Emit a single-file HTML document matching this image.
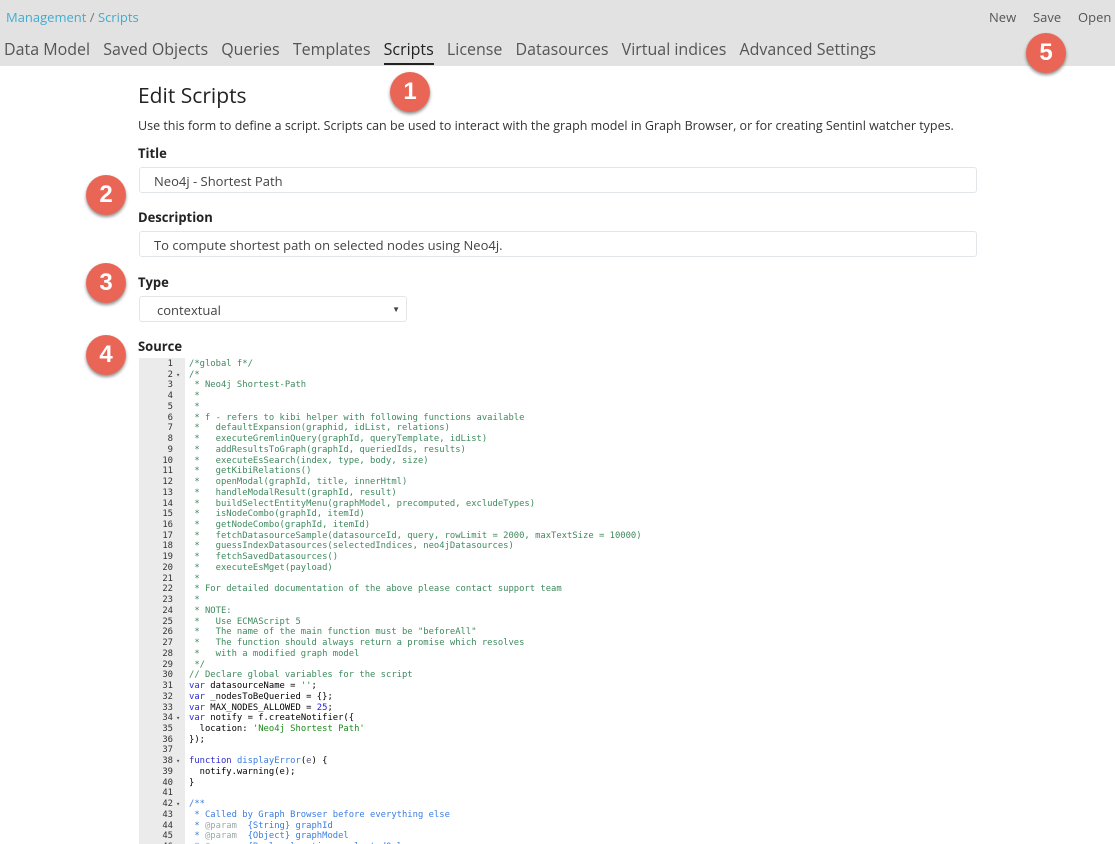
<!DOCTYPE html>
<html><head><meta charset="utf-8"><style>
body{margin:0;width:1115px;height:844px;overflow:hidden;background:#fff;font-family:"Open Sans","Liberation Sans",sans-serif;position:relative;color:#222}
.hdr{position:absolute;left:0;top:0;width:1115px;height:66px;background:#e2e2e2}
.bc{position:absolute;left:6px;top:8px;font-size:13px;color:#3caed2}
.bc span{color:#777}
.tabs{position:absolute;left:4px;top:38px;font-size:16px;color:#555;white-space:nowrap}
.tabs b{font-weight:normal;margin-right:9px;display:inline-block}
.tabs b.a{color:#222;border-bottom:2px solid #222;padding-bottom:3px}
.act{position:absolute;top:8px;font-size:13px;color:#555}
.badge{position:absolute;width:40px;height:40px;border-radius:50%;background:#e96656;color:#fff;font:bold 24px "Liberation Sans",sans-serif;text-align:center;line-height:40px;box-shadow:0 2px 3px rgba(0,0,0,.45)}
h1{position:absolute;left:138px;top:82px;margin:0;font-size:21px;font-weight:normal;color:#222}
.p{position:absolute;left:138px;top:117px;font-size:12.5px;color:#333}
.lbl{position:absolute;left:138px;font-size:13px;font-weight:bold;color:#222}
.in{position:absolute;left:139px;height:26px;border:1px solid #e3e6e8;border-radius:3px;font-size:13px;color:#444;line-height:26px;box-sizing:border-box;padding-left:14px}
.code{position:absolute;left:139px;top:358px;width:976px;height:486px;overflow:hidden}
.gut{position:absolute;left:0;top:0;width:46px;height:486px;background:#ebebeb}
pre{margin:0;font-family:"DejaVu Sans Mono","Liberation Mono",monospace;font-size:8.85px;line-height:10.73px;position:absolute;top:1px}
.num{left:0;width:34px;text-align:right;color:#333}
.fold{left:37px;color:#555;font-size:7px}
.src{left:50px;color:#000}
.c{color:#3e8a5e}.k{color:#2b2bd0}.d{color:#3b7de0}.s{color:#1d8a1d}.n{color:#2020e0}.dc{color:#9aa}
</style></head><body>
<div class="hdr">
<div class="bc">Management <span>/</span> Scripts</div>
<div class="tabs"><b>Data Model</b> <b>Saved Objects</b> <b>Queries</b> <b>Templates</b> <b class="a">Scripts</b> <b>License</b> <b>Datasources</b> <b>Virtual indices</b> <b>Advanced Settings</b></div>
<div class="act" style="left:989px">New</div><div class="act" style="left:1033px">Save</div><div class="act" style="left:1078px">Open</div>
</div>
<div class="badge" style="left:390px;top:72px">1</div>
<div class="badge" style="left:86px;top:175px">2</div>
<div class="badge" style="left:86px;top:263px">3</div>
<div class="badge" style="left:86px;top:335px">4</div>
<div class="badge" style="left:1026px;top:33px">5</div>
<h1>Edit Scripts</h1>
<div class="p">Use this form to define a script. Scripts can be used to interact with the graph model in Graph Browser, or for creating Sentinl watcher types.</div>
<div class="lbl" style="top:144px">Title</div>
<div class="in" style="top:167px;width:838px">Neo4j - Shortest Path</div>
<div class="lbl" style="top:208px">Description</div>
<div class="in" style="top:231px;width:838px">To compute shortest path on selected nodes using Neo4j.</div>
<div class="lbl" style="top:273px">Type</div>
<div class="in" style="top:296px;width:268px;padding-left:17px">contextual<span style="position:absolute;right:6px;top:0;font-size:8px">▼</span></div>
<div class="lbl" style="top:337px">Source</div>
<div class="code"><div class="gut"></div>
<pre class="num">1
2
3
4
5
6
7
8
9
10
11
12
13
14
15
16
17
18
19
20
21
22
23
24
25
26
27
28
29
30
31
32
33
34
35
36
37
38
39
40
41
42
43
44
45
46</pre>
<pre class="fold"> 
▾































▾



▾



▾</pre>
<pre class="src"><span class="c">/*global f*/
/*
 * Neo4j Shortest-Path
 *
 *
 * f - refers to kibi helper with following functions available
 *   defaultExpansion(graphid, idList, relations)
 *   executeGremlinQuery(graphId, queryTemplate, idList)
 *   addResultsToGraph(graphId, queriedIds, results)
 *   executeEsSearch(index, type, body, size)
 *   getKibiRelations()
 *   openModal(graphId, title, innerHtml)
 *   handleModalResult(graphId, result)
 *   buildSelectEntityMenu(graphModel, precomputed, excludeTypes)
 *   isNodeCombo(graphId, itemId)
 *   getNodeCombo(graphId, itemId)
 *   fetchDatasourceSample(datasourceId, query, rowLimit = 2000, maxTextSize = 10000)
 *   guessIndexDatasources(selectedIndices, neo4jDatasources)
 *   fetchSavedDatasources()
 *   executeEsMget(payload)
 *
 * For detailed documentation of the above please contact support team
 *
 * NOTE:
 *   Use ECMAScript 5
 *   The name of the main function must be "beforeAll"
 *   The function should always return a promise which resolves
 *   with a modified graph model
 */
// Declare global variables for the script</span>
<span class="k">var</span> datasourceName = <span class="s">''</span>;
<span class="k">var</span> _nodesToBeQueried = {};
<span class="k">var</span> MAX_NODES_ALLOWED = <span class="n">25</span>;
<span class="k">var</span> notify = f.createNotifier({
  location: <span class="s">'Neo4j Shortest Path'</span>
});

<span class="k">function</span> <span class="d">displayError</span>(<span style="color:#557">e</span>) {
  notify.warning(e);
}

<span class="d">/**
 * Called by Graph Browser before everything else
 * <span class="dc">@param</span>  {String} graphId
 * <span class="dc">@param</span>  {Object} graphModel
 * <span class="dc">@param</span>  {Boolean} options.selectedOnly</span></pre>
</div>
</body></html>
